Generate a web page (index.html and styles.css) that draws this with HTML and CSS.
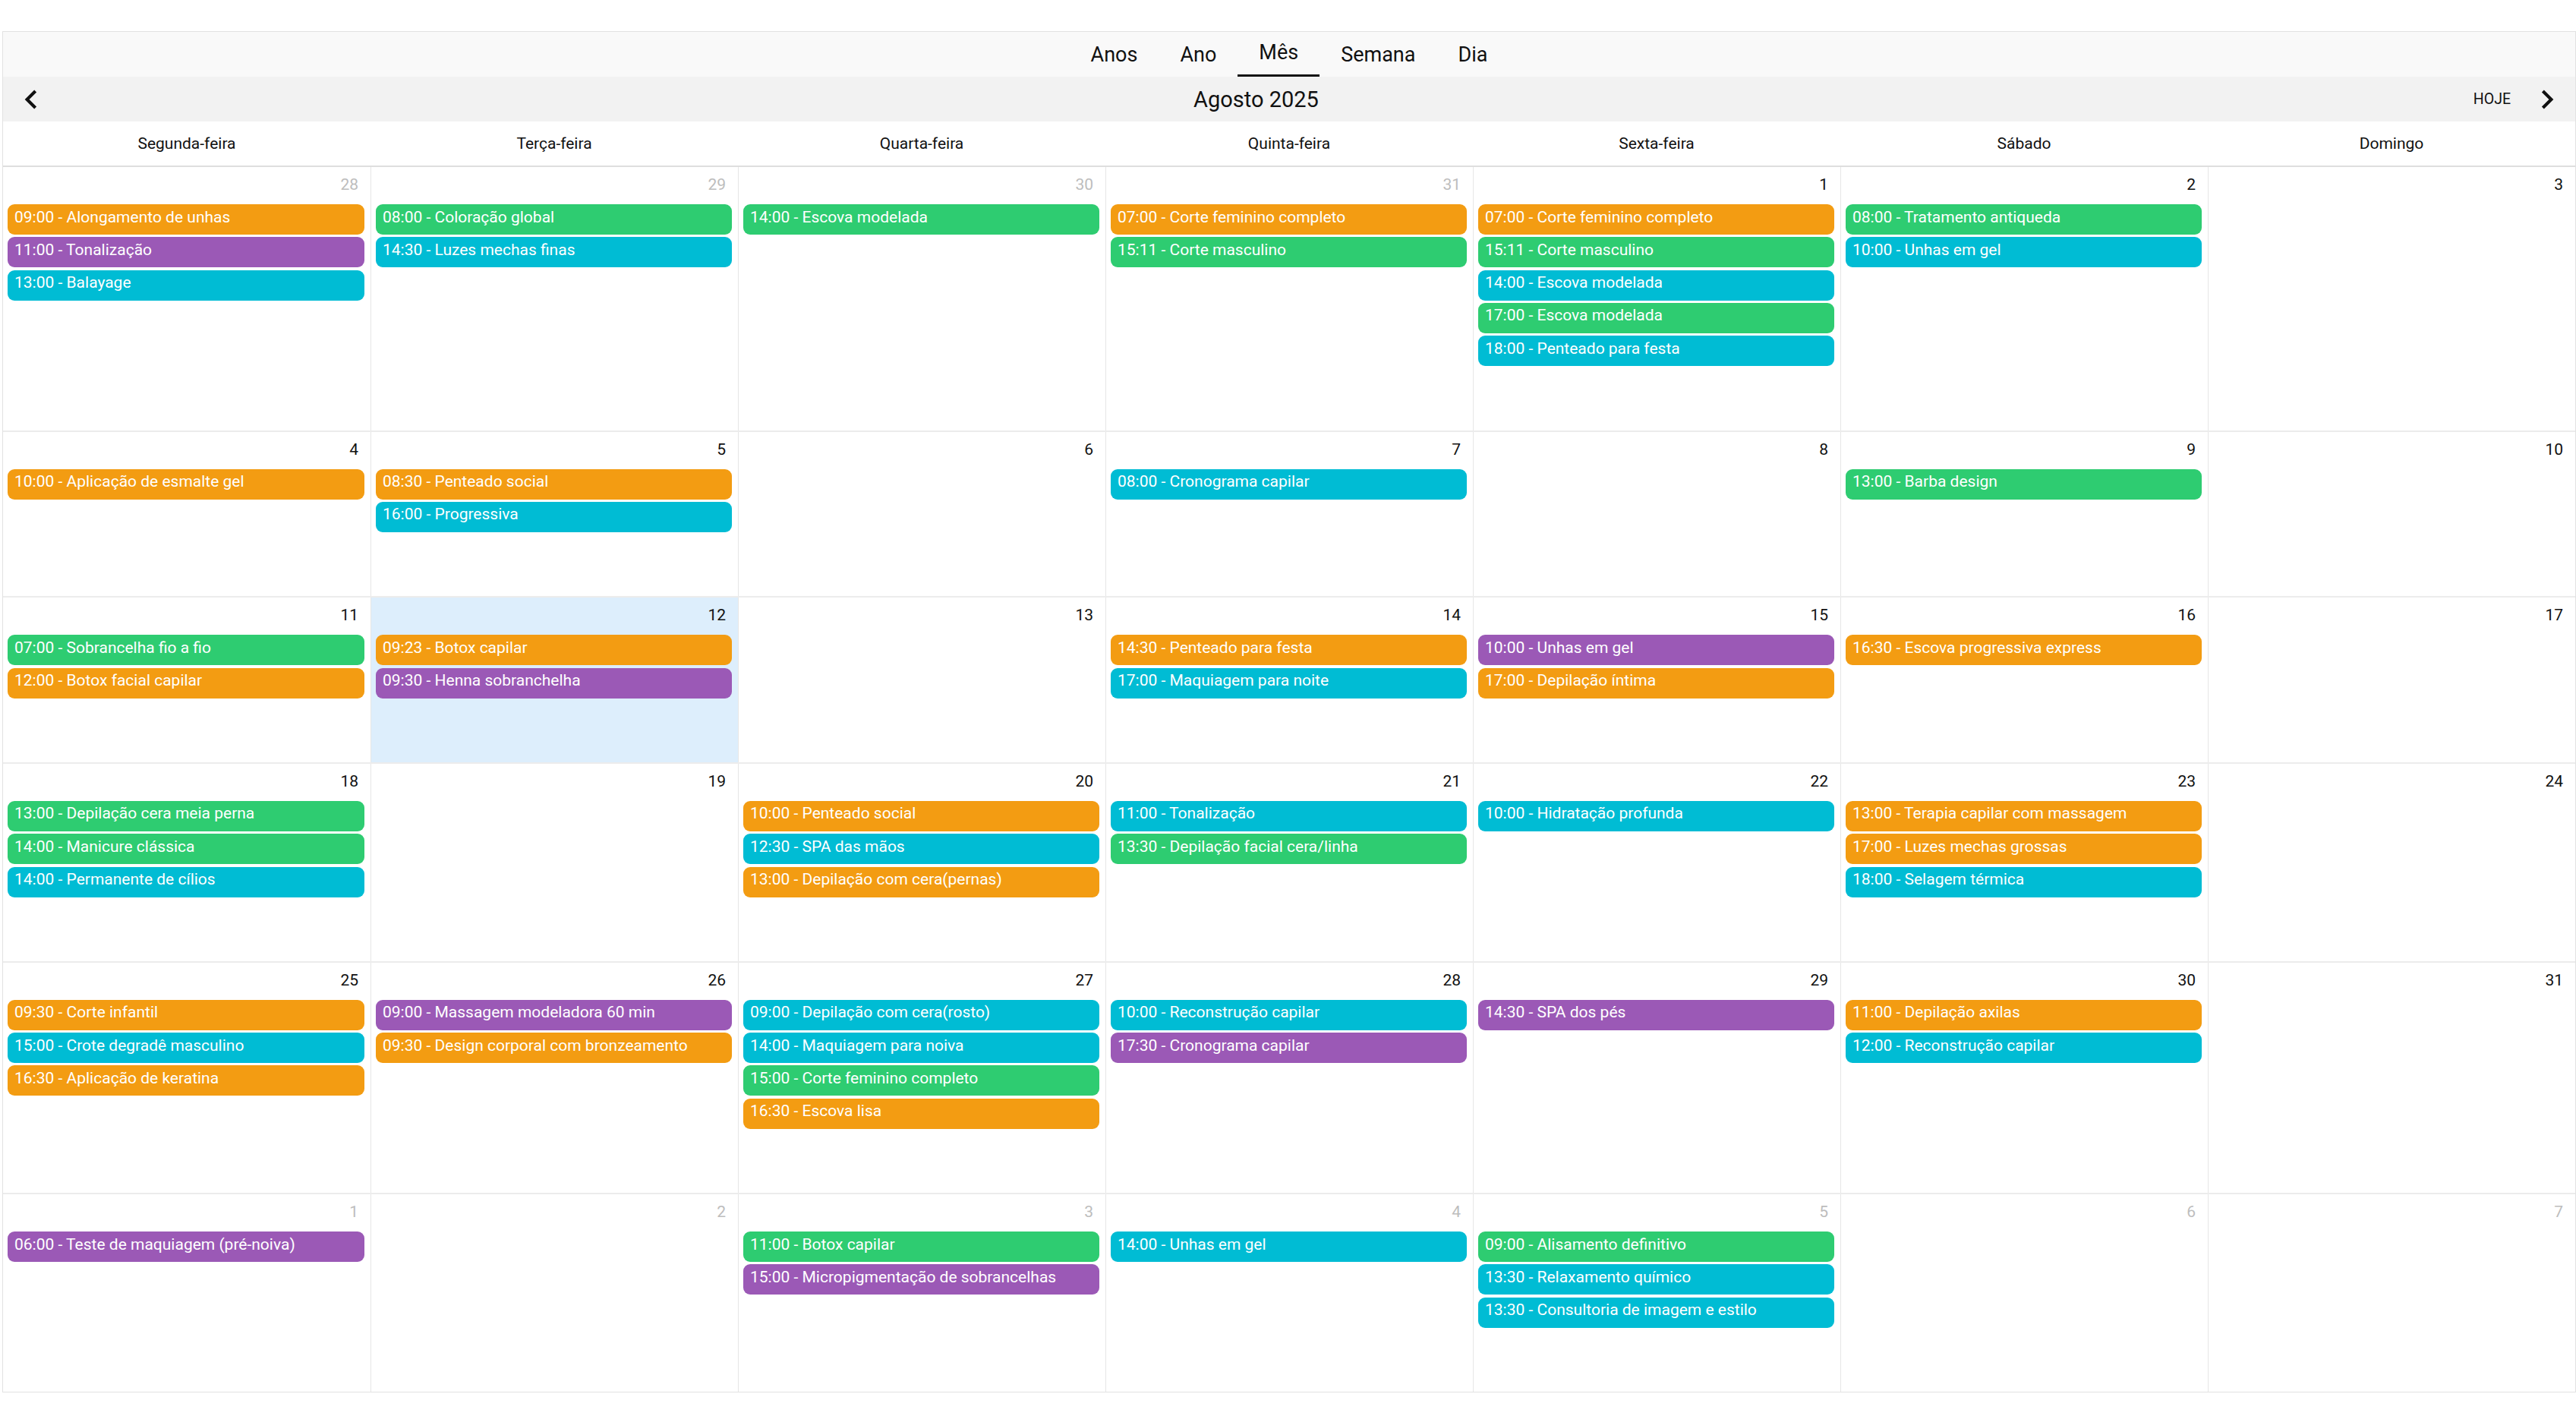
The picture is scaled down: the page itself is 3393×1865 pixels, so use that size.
FILE: index.html
```html
<!DOCTYPE html>
<html lang="pt-BR">
<head>
<meta charset="utf-8">
<title>Agenda - Agosto 2025</title>
<link rel="stylesheet" href="styles.css">
</head>
<body>
<div class="app">
  <div class="tabbar">
    <div class="tab">Anos</div>
    <div class="tab">Ano</div>
    <div class="tab active">Mês</div>
    <div class="tab">Semana</div>
    <div class="tab">Dia</div>
  </div>
  <div class="navbar">
    <button class="nav-btn prev" aria-label="Anterior">
      <svg width="50" height="50" viewBox="0 0 24 24"><path d="M15.41 7.41L14 6l-6 6 6 6 1.41-1.41L10.83 12z"/></svg>
    </button>
    <div class="title">Agosto 2025</div>
    <button class="today-btn">HOJE</button>
    <button class="nav-btn next" aria-label="Próximo">
      <svg width="50" height="50" viewBox="0 0 24 24"><path d="M10 6L8.59 7.41 13.17 12l-4.58 4.59L10 18l6-6z"/></svg>
    </button>
  </div>
  <div class="weekdays">
    <div>Segunda-feira</div>
    <div>Terça-feira</div>
    <div>Quarta-feira</div>
    <div>Quinta-feira</div>
    <div>Sexta-feira</div>
    <div>Sábado</div>
    <div>Domingo</div>
  </div>
  <div class="month">
    <div class="week">
      <div class="day other"><div class="num">28</div>
        <div class="ev o">09:00 - Alongamento de unhas</div>
        <div class="ev p">11:00 - Tonalização</div>
        <div class="ev c">13:00 - Balayage</div>
      </div>
      <div class="day other"><div class="num">29</div>
        <div class="ev g">08:00 - Coloração global</div>
        <div class="ev c">14:30 - Luzes mechas finas</div>
      </div>
      <div class="day other"><div class="num">30</div>
        <div class="ev g">14:00 - Escova modelada</div>
      </div>
      <div class="day other"><div class="num">31</div>
        <div class="ev o">07:00 - Corte feminino completo</div>
        <div class="ev g">15:11 - Corte masculino</div>
      </div>
      <div class="day"><div class="num">1</div>
        <div class="ev o">07:00 - Corte feminino completo</div>
        <div class="ev g">15:11 - Corte masculino</div>
        <div class="ev c">14:00 - Escova modelada</div>
        <div class="ev g">17:00 - Escova modelada</div>
        <div class="ev c">18:00 - Penteado para festa</div>
      </div>
      <div class="day"><div class="num">2</div>
        <div class="ev g">08:00 - Tratamento antiqueda</div>
        <div class="ev c">10:00 - Unhas em gel</div>
      </div>
      <div class="day"><div class="num">3</div></div>
    </div>
    <div class="week">
      <div class="day"><div class="num">4</div>
        <div class="ev o">10:00 - Aplicação de esmalte gel</div>
      </div>
      <div class="day"><div class="num">5</div>
        <div class="ev o">08:30 - Penteado social</div>
        <div class="ev c">16:00 - Progressiva</div>
      </div>
      <div class="day"><div class="num">6</div></div>
      <div class="day"><div class="num">7</div>
        <div class="ev c">08:00 - Cronograma capilar</div>
      </div>
      <div class="day"><div class="num">8</div></div>
      <div class="day"><div class="num">9</div>
        <div class="ev g">13:00 - Barba design</div>
      </div>
      <div class="day"><div class="num">10</div></div>
    </div>
    <div class="week">
      <div class="day"><div class="num">11</div>
        <div class="ev g">07:00 - Sobrancelha fio a fio</div>
        <div class="ev o">12:00 - Botox facial capilar</div>
      </div>
      <div class="day today"><div class="num">12</div>
        <div class="ev o">09:23 - Botox capilar</div>
        <div class="ev p">09:30 - Henna sobranchelha</div>
      </div>
      <div class="day"><div class="num">13</div></div>
      <div class="day"><div class="num">14</div>
        <div class="ev o">14:30 - Penteado para festa</div>
        <div class="ev c">17:00 - Maquiagem para noite</div>
      </div>
      <div class="day"><div class="num">15</div>
        <div class="ev p">10:00 - Unhas em gel</div>
        <div class="ev o">17:00 - Depilação íntima</div>
      </div>
      <div class="day"><div class="num">16</div>
        <div class="ev o">16:30 - Escova progressiva express</div>
      </div>
      <div class="day"><div class="num">17</div></div>
    </div>
    <div class="week">
      <div class="day"><div class="num">18</div>
        <div class="ev g">13:00 - Depilação cera meia perna</div>
        <div class="ev g">14:00 - Manicure clássica</div>
        <div class="ev c">14:00 - Permanente de cílios</div>
      </div>
      <div class="day"><div class="num">19</div></div>
      <div class="day"><div class="num">20</div>
        <div class="ev o">10:00 - Penteado social</div>
        <div class="ev c">12:30 - SPA das mãos</div>
        <div class="ev o">13:00 - Depilação com cera(pernas)</div>
      </div>
      <div class="day"><div class="num">21</div>
        <div class="ev c">11:00 - Tonalização</div>
        <div class="ev g">13:30 - Depilação facial cera/linha</div>
      </div>
      <div class="day"><div class="num">22</div>
        <div class="ev c">10:00 - Hidratação profunda</div>
      </div>
      <div class="day"><div class="num">23</div>
        <div class="ev o">13:00 - Terapia capilar com massagem</div>
        <div class="ev o">17:00 - Luzes mechas grossas</div>
        <div class="ev c">18:00 - Selagem térmica</div>
      </div>
      <div class="day"><div class="num">24</div></div>
    </div>
    <div class="week">
      <div class="day"><div class="num">25</div>
        <div class="ev o">09:30 - Corte infantil</div>
        <div class="ev c">15:00 - Crote degradê masculino</div>
        <div class="ev o">16:30 - Aplicação de keratina</div>
      </div>
      <div class="day"><div class="num">26</div>
        <div class="ev p">09:00 - Massagem modeladora 60 min</div>
        <div class="ev o">09:30 - Design corporal com bronzeamento</div>
      </div>
      <div class="day"><div class="num">27</div>
        <div class="ev c">09:00 - Depilação com cera(rosto)</div>
        <div class="ev c">14:00 - Maquiagem para noiva</div>
        <div class="ev g">15:00 - Corte feminino completo</div>
        <div class="ev o">16:30 - Escova lisa</div>
      </div>
      <div class="day"><div class="num">28</div>
        <div class="ev c">10:00 - Reconstrução capilar</div>
        <div class="ev p">17:30 - Cronograma capilar</div>
      </div>
      <div class="day"><div class="num">29</div>
        <div class="ev p">14:30 - SPA dos pés</div>
      </div>
      <div class="day"><div class="num">30</div>
        <div class="ev o">11:00 - Depilação axilas</div>
        <div class="ev c">12:00 - Reconstrução capilar</div>
      </div>
      <div class="day"><div class="num">31</div></div>
    </div>
    <div class="week">
      <div class="day other"><div class="num">1</div>
        <div class="ev p">06:00 - Teste de maquiagem (pré-noiva)</div>
      </div>
      <div class="day other"><div class="num">2</div></div>
      <div class="day other"><div class="num">3</div>
        <div class="ev g">11:00 - Botox capilar</div>
        <div class="ev p">15:00 - Micropigmentação de sobrancelhas</div>
      </div>
      <div class="day other"><div class="num">4</div>
        <div class="ev c">14:00 - Unhas em gel</div>
      </div>
      <div class="day other"><div class="num">5</div>
        <div class="ev g">09:00 - Alisamento definitivo</div>
        <div class="ev c">13:30 - Relaxamento químico</div>
        <div class="ev c">13:30 - Consultoria de imagem e estilo</div>
      </div>
      <div class="day other"><div class="num">6</div></div>
      <div class="day other"><div class="num">7</div></div>
    </div>
  </div>
</div>
</body>
</html>
```
FILE: styles.css
```css
* { box-sizing: border-box; }

html, body {
  margin: 0;
  padding: 0;
  background: #ffffff;
}

body {
  font-family: Roboto, "Liberation Sans", Arial, sans-serif;
  color: #111;
}

.app {
  margin: 41px 0 0 3px;
  border: 1px solid #e2e2e2;
  display: flex;
  flex-direction: column;
}

/* view tabs */
.tabbar {
  height: 59px;
  background: #f9f9f9;
  display: flex;
  justify-content: center;
  align-items: stretch;
}

.tab {
  padding: 0 28px;
  font-size: 27px;
  display: flex;
  align-items: center;
  color: #111;
}

.tab.active {
  border-bottom: 3px solid #111;
  padding-bottom: 1.5px;
}

/* navigation */
.navbar {
  height: 59px;
  background: #f2f2f2;
  display: flex;
  align-items: center;
}

.nav-btn {
  border: 0;
  background: transparent;
  padding: 0;
  height: 59px;
  display: flex;
  align-items: center;
  justify-content: center;
}

.nav-btn svg { display: block; fill: #111; }

.nav-btn.prev { width: 73px; }
.nav-btn.next { width: 74px; }

.title {
  flex: 1;
  text-align: center;
  font-size: 29px;
  color: #111;
}

.today-btn {
  border: 0;
  background: transparent;
  font-family: inherit;
  font-size: 19.5px;
  color: #111;
  height: 59px;
  padding: 0 11px 0 26px;
}

/* weekday header */
.weekdays {
  height: 60px;
  display: grid;
  grid-template-columns: repeat(7, 1fr);
  border-bottom: 2px solid #dedede;
  background: #fff;
}

.weekdays div {
  display: flex;
  align-items: center;
  justify-content: center;
  font-size: 21px;
  color: #111;
}

/* month grid */
.month {
  height: 1613px;
  display: flex;
  flex-direction: column;
}

.week {
  flex: 1 1 auto;
  display: grid;
  grid-template-columns: repeat(7, 1fr);
}

.week + .week {
  border-top: 2px solid #ececec;
}

.day {
  min-width: 0;
  background: #fff;
}

.day + .day {
  border-left: 1px solid #e6e6e6;
}

.day.today {
  background: #ddeefc;
}

.num {
  height: 49px;
  padding: 11px 16px 0 0;
  text-align: right;
  font-size: 21px;
  line-height: 24px;
  color: #111;
}

.day.other .num {
  color: #bdbdbd;
}

.ev {
  height: 40px;
  margin: 0 8px 3.33px 6px;
  padding: 4.5px 9px 0 9px;
  border-radius: 9px;
  color: #fff;
  font-size: 21px;
  line-height: 24px;
  white-space: nowrap;
  overflow: hidden;
}

.ev.o { background: #f39c12; }
.ev.g { background: #2ecc71; }
.ev.p { background: #9b59b6; }
.ev.c { background: #00bcd4; }
```
